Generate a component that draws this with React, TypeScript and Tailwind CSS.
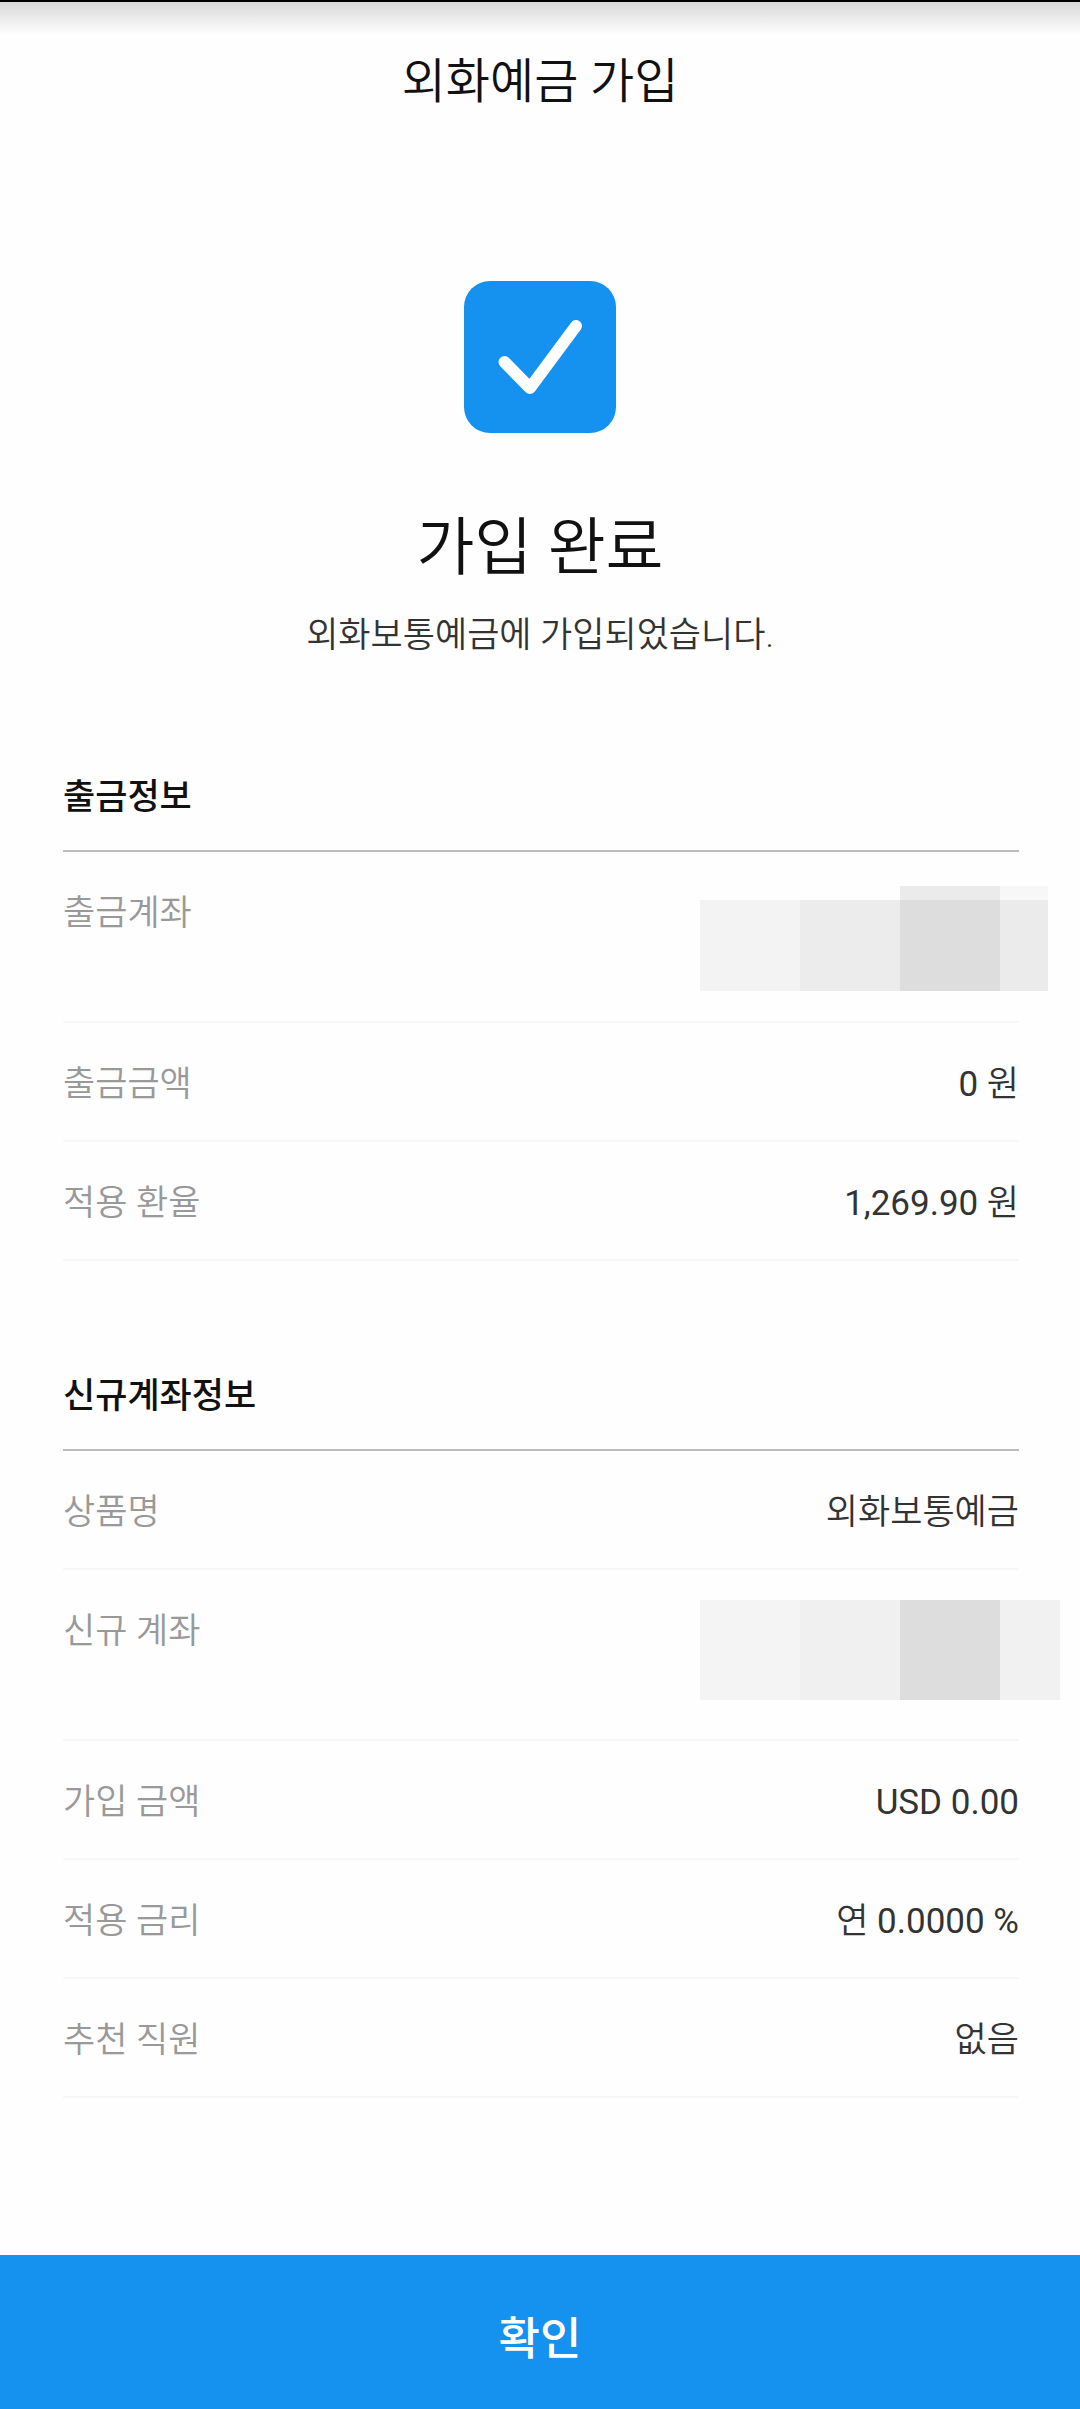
import { ReactNode } from "react";

type RowProps = { label: string; children: ReactNode; tall?: boolean };

function Row({ label, children, tall }: RowProps) {
  return (
    <div
      className={`flex justify-between border-b-2 border-[#f7f7f7] pt-[38px] text-[35px] leading-[48px] ${tall ? "h-[171px]" : "h-[119px]"}`}
    >
      <dt className="text-[#999999]">{label}</dt>
      <dd className="text-[#333333]">{children}</dd>
    </div>
  );
}

function Section({ title, children }: { title: string; children: ReactNode }) {
  return (
    <section className="mr-[61px] ml-[63px]">
      <h2 className="border-b-2 border-[#bbbbbb] pb-7 text-[35px] leading-[48px] font-medium text-[#111111]">{title}</h2>
      <dl>{children}</dl>
    </section>
  );
}

// account numbers are masked with grey blocks that run past the row's edge
function MaskedWithdrawal() {
  return (
    <div className="-mt-1 -mr-[29px] flex h-[105px] items-end" role="img" aria-label="가려진 계좌번호">
      <div className="h-[91px] w-[100px] bg-[#f3f3f3]" />
      <div className="h-[91px] w-[100px] bg-[#ececec]" />
      <div className="h-[105px] w-[100px] border-t-14 border-[#ebebeb] bg-[#dddddd]" />
      <div className="h-[105px] w-12 border-t-14 border-[#f7f7f7] bg-[#ebebeb]" />
    </div>
  );
}

function MaskedAccount() {
  return (
    <div className="-mt-2 -mr-[41px] flex h-[100px]" role="img" aria-label="가려진 계좌번호">
      <div className="w-[100px] bg-[#f4f4f4]" />
      <div className="w-[100px] bg-[#f0f0f0]" />
      <div className="w-[100px] bg-[#dddddd]" />
      <div className="w-[60px] bg-[#f1f1f1]" />
    </div>
  );
}

export default function App() {
  return (
    <div className="flex min-h-screen flex-col bg-[#fefefe] font-[Roboto,'Noto_Sans_CJK_KR',sans-serif] font-[350]">
      <header className="border-t-2 border-black bg-linear-to-b from-[#d8d8d8] to-[#fefefe] to-[32px] pt-12 text-center">
        <h1 className="text-[48px] leading-[64px] text-[#111111]">외화예금 가입</h1>
      </header>

      <main className="flex-1">
        <div className="flex flex-col items-center pt-[167px]">
          <svg viewBox="0 0 152 152" className="size-[152px]" aria-hidden="true">
            <rect width="152" height="152" rx="26" fill="#1591ef" />
            <path d="M40.5 81 66 107 112 45" fill="none" stroke="#fff" strokeWidth="12" strokeLinecap="round" strokeLinejoin="round" />
          </svg>
          <p className="mt-[75px] text-[63px] leading-[80px] text-[#111111]">가입 완료</p>
          <p className="mt-6 text-[35px] leading-[48px] text-[#333333]">외화보통예금에 가입되었습니다.</p>
        </div>

        <div className="mt-[114px] flex flex-col gap-28">
          <Section title="출금정보">
            <Row label="출금계좌" tall>
              <MaskedWithdrawal />
            </Row>
            <Row label="출금금액">
              <span className="font-normal">0</span> 원
            </Row>
            <Row label="적용 환율">
              <span className="font-normal">1,269.90</span> 원
            </Row>
          </Section>
          <Section title="신규계좌정보">
            <Row label="상품명">외화보통예금</Row>
            <Row label="신규 계좌" tall>
              <MaskedAccount />
            </Row>
            <Row label="가입 금액">
              <span className="font-normal">USD 0.00</span>
            </Row>
            <Row label="적용 금리">
              연 <span className="font-normal">0.0000 %</span>
            </Row>
            <Row label="추천 직원">없음</Row>
          </Section>
        </div>
      </main>

      <button className="h-[154px] bg-[#1591ef] pt-4 text-[45px] font-medium text-white">확인</button>
    </div>
  );
}
